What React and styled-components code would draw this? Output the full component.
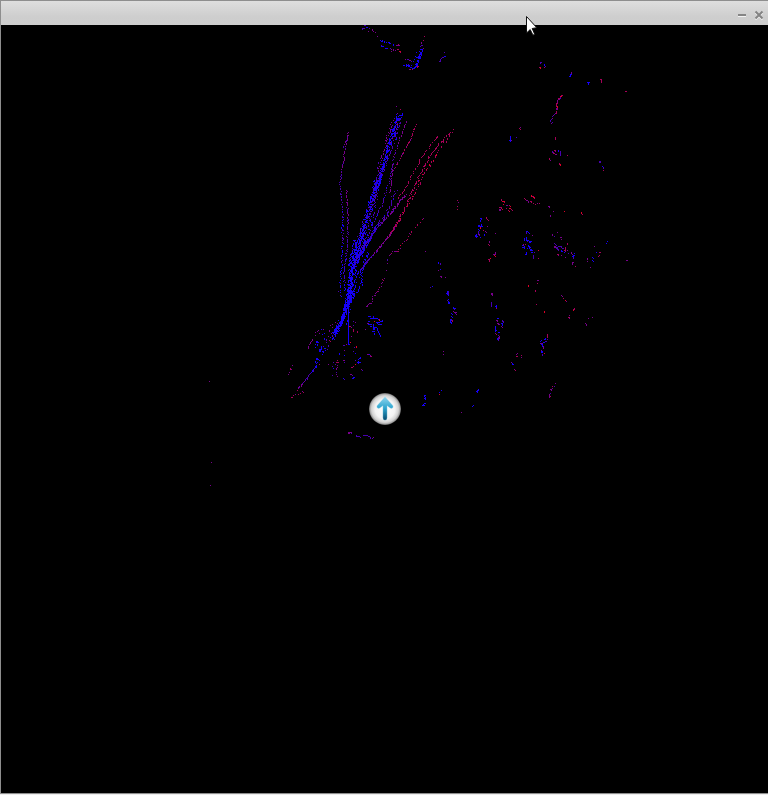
import React from "react";
import styled, { createGlobalStyle } from "styled-components";

const GlobalStyle = createGlobalStyle`
  * { box-sizing: border-box; }
  body { margin: 0; background: #ededed; overflow: hidden; }
`;

const Window = styled.main`
  position: relative;
  display: flex;
  flex-direction: column;
  width: 768px;
  height: 794px;
  border: solid #8e8e8e;
  border-width: 1px 0 1px 1px;
  background: #000;
  overflow: hidden;
`;

const TitleBar = styled.header`
  flex: 0 0 24px;
  display: flex;
  justify-content: flex-end;
  align-items: flex-start;
  gap: 7px;
  padding: 9px 4px 0 0;
  background: linear-gradient(#dedede, #cecece 65%, #cdcdcd);
`;

const ControlButton = styled.button`
  display: block;
  width: 10px;
  height: 11px;
  padding: 0;
  border: 0;
  background: none;
  svg { display: block; }
`;

const Viewport = styled.section`
  flex: 1;
  min-height: 0;
`;

const Plot = styled.svg`
  display: block;
  width: 767px;
  height: 768px;
  shape-rendering: crispEdges;
`;

const Marker = styled.svg`
  position: absolute;
  left: 367px;
  top: 391px;
`;

const Pointer = styled.svg`
  position: absolute;
  left: 524px;
  top: 14px;
`;

const COLORS = { b: "#1600f8", v: "#4800b0", p: "#78008c", m: "#a60058", r: "#dc0028" };

/* Hand-placed returns. Sample units are a third of a pixel from the group's origin.
   Each sample: x,y,colour[,width,height] with width and height in pixels. */
const GROUPS = [
  [280, 20, "252,15,v,2 246,27,v 246,24,v,3 258,21,b,2 267,24,v 264,33,p 276,27,p,1,2 279,33,p 285,36,p 291,48,p 300,60,b 303,63,b,2 306,60,b 312,63,b,1,2 318,66,b 324,66,b,2 327,69,b,2 339,72,b,1,2 348,75,p,4 354,72,m 303,75,v 303,78,b,3 315,84,b,3 330,84,v 333,87,p 333,93,p 339,87,p,1,2 345,90,p 351,87,m,2 357,93,r,2 360,96,m 432,48,m 429,60,m 423,66,p,1,2 420,78,v 423,75,v,2 429,84,p 426,87,b,1,3 420,87,b,2 420,96,b,1,3 423,96,b,1,4 417,93,b 408,96,b 417,102,b,1,5 414,108,b,3,3 408,111,b,3 405,108,b 411,120,b,2,2 414,123,b,1,2 408,129,b,2,4 405,132,b,2 411,138,m,2 411,141,m 405,138,b 402,141,b,2 396,144,b,3 390,141,b,2 378,132,b,1,3 381,135,b,3 384,132,v 384,138,b,2 369,135,b,2 375,117,p 381,117,v,2 387,120,p,2 393,123,v 399,123,b 402,117,b 393,135,b 387,147,p,2 396,147,m 492,96,v 492,108,b,2 486,111,v,2 483,114,v 480,117,v,1,2 477,123,v,2 348,258,p 360,267,m 351,279,p 348,282,b 366,279,b,1,2 357,285,b,4 354,288,b 363,291,b 354,294,b,3 360,297,v 354,300,b,2 342,294,v 339,300,p 348,288,b 348,306,m 351,312,r 336,315,v 351,318,b,1,2 345,321,p 333,327,b 348,327,b,2 345,333,b,1,2 342,339,b,2,3 330,336,v 336,339,b,2 324,336,p 336,354,m 318,345,p 330,366,m 315,360,p 321,369,p 204,336,p 204,345,p 201,351,v 198,360,v,1,2 198,369,v,1,2 192,372,p 189,378,v,1,2 195,378,b"],
  [460, 50, "240,36,v,2 240,39,v 252,42,b,1,2 255,48,v 252,51,m 237,51,m 240,51,r,1,2 333,66,p,1,2 330,72,b,2 330,75,b 327,78,b,2 381,96,b,3 384,99,b,1,2 420,87,m,2 423,90,m,1,3 495,123,m,2 306,135,m 303,135,m 300,138,r,2 300,141,v,1,2 294,144,m,2 294,147,p,2 291,150,p,1,3 288,159,m,2 288,162,m,1,3 291,168,r,1,2 288,174,p,2,2 288,183,m,1,3 285,189,p 282,192,v 279,195,p 276,198,v 276,204,p 273,207,v 270,210,v,1,2 276,216,v 273,219,p 180,231,p 177,234,m 180,237,m 168,261,v 150,258,b,1,4 147,270,b,2 153,270,p 150,273,b 285,261,m,1,3 282,300,m,2 285,303,p 276,303,v,1,2 279,306,p 279,309,m,2 285,312,p,2 294,300,b,1,2 300,303,v,1,2 300,309,v,1,3 267,324,m,1,2 270,330,p 297,339,m,1,2 300,342,r,1,2 321,315,m 417,333,v,2,2 426,348,b 429,351,v,1,2 429,360,m 192,444,m 195,447,m 213,435,r,1,2 216,438,m,2 219,441,r,2 222,444,m 123,447,p"],
  [460, 190, "123,27,m,1,2 126,33,r,3 132,36,m 129,42,r 138,45,p,2 147,45,m 150,48,r 117,51,m,3 123,54,m 117,57,p,2,2 126,57,r 138,54,m 147,54,r,2 153,57,m 144,60,m 156,60,m 147,63,r 192,24,m 195,27,p 198,30,p,2 204,33,p,1,2 210,33,m,2 213,36,m 219,39,m 225,42,m 231,39,p 237,39,m 264,48,p,2 267,51,p 279,63,p 270,75,p,1,2 312,63,r 363,66,r,1,2 366,72,m 60,84,b,2 63,87,b 60,90,b,1,2 78,81,m,1,2 81,87,m 84,90,m 54,105,b,2,2 57,108,b,4 63,102,b,1,3 60,111,r,1,2 54,117,b 57,120,b 54,123,v,1,4 57,132,m 57,135,v 48,132,b 45,135,b,2,2 51,138,b 48,141,v 60,141,b 69,120,m 75,123,p 78,126,p 72,132,b,1,2 81,108,p 105,129,p 87,153,p,1,2 84,162,m 87,165,m 105,186,p,1,2 99,192,p,3 102,195,r 105,198,r 90,204,r 84,207,m,2 87,210,m,1,2 198,123,b,2 198,126,v,1,2 204,126,b 207,129,b 216,135,p 192,144,b,1,3 198,141,b,1,4 198,150,b,3 201,153,v 207,153,b,3 207,156,b,2 189,162,p,1,2 195,162,m 186,165,b,2 192,168,b,1,3 186,171,b,3 201,174,b 204,165,b,1,2 207,168,b 207,171,b,2 207,174,b 210,177,b,2,2 216,180,b 213,186,b,2 222,186,v 198,186,b,1,3 195,192,b 219,195,v,1,4 234,180,r 234,204,m 276,132,p,1,2 282,138,v 291,126,p 300,141,p,2 303,147,p 282,159,v 285,162,v 288,165,v 282,168,p,2,2 288,171,v,2,2 294,168,v,4 291,177,v,2 294,180,v 303,171,v 306,174,v,2 303,180,b,1,2 306,183,b 312,186,b 312,180,m,2 315,171,m,1,3 315,183,p 321,159,m,1,2 321,180,p 291,192,m,2 294,195,p 303,195,p 315,201,p 324,189,v 333,186,p,1,2 336,192,p 339,195,b,2 342,189,b 336,198,b,2 339,201,v,1,2 336,216,p,2 336,219,p,1,2 345,228,m 402,168,p 408,186,b 417,186,m,2 417,195,m 414,198,m 381,204,p,1,2 381,213,p 396,201,b 399,204,b 396,210,b 399,213,b 390,231,p 441,153,b 438,159,b 498,210,p,2 231,270,p,2 231,279,m 204,285,r,1,2"],
  [420, 280, "36,18,b 30,21,v 81,33,b,2 81,36,b,1,3 78,39,b 84,45,b 84,57,b 81,60,v 84,63,b,1,3 87,66,b,1,2 99,81,b,1,2 102,84,b,2 102,87,v 99,93,p 102,96,p,3 105,99,v 108,102,p 93,99,b 96,102,b 93,108,b 96,111,b 90,117,b,1,4 93,117,v,1,2 96,120,m,1,2 93,126,b,1,2 213,39,p,2,2 216,45,p 213,66,v,1,5 228,75,b,1,3 225,78,b 228,84,m 231,114,b,2 228,120,p,2 231,123,p 246,120,v,1,2 249,123,v,1,2 243,129,b,2 246,132,b,1,2 231,129,p,2 234,132,p,2 243,138,p 246,141,p 225,138,b,1,6 228,150,b 234,156,b,2 225,159,p 228,162,m 234,165,v 237,168,p,1,3 234,171,v,1,4 231,174,b,1,2 69,213,p 69,222,p 291,219,p 288,222,p 288,228,m,2 303,225,m 303,231,p 273,246,p 276,249,b,1,2 279,252,b 282,267,p 285,270,m 324,15,r,1,2 351,0,p,2 351,9,p 345,30,m,1,2 348,72,m 372,93,r,1,2 423,45,p 426,48,p 429,54,m 435,60,r 438,63,p 447,105,p 444,111,m,2 447,114,p 462,84,m,1,2 459,87,m 459,90,r 504,114,p 516,111,p 495,129,p 498,132,p,1,2 381,162,m,1,4 375,174,b,1,2 372,177,b 381,177,v 363,180,b 360,183,b 375,183,v,2 369,186,b,2 360,189,p,3 363,192,b,2 366,195,b,1,2 369,198,p,1,3 363,210,p 363,213,b,2,2 372,219,r 366,222,v,1,2 405,309,p 402,318,v 396,318,m 396,324,p 390,327,p,2 393,330,p 390,339,v 387,342,p,1,4 390,348,m 174,327,b,1,2 171,330,b,1,3 168,333,b 63,330,b 57,336,b 57,342,r 12,345,b,2 12,348,b 15,351,b,1,3 12,354,b 12,369,b,2 9,372,b 6,375,b,3 159,375,b 156,378,b 123,396,p"],
  [280, 290, "294,3,p 288,6,p 285,9,p 285,15,p 276,24,p 276,33,p 273,39,p 267,39,p,2 264,42,p 261,45,p 258,48,p,2 174,3,v 180,6,b 180,15,v 183,18,b 264,78,b,3 279,78,b,1,3 270,84,b,5 285,84,b,3 294,87,b 297,87,r,1,2 282,93,r 264,93,b,2 300,93,b,3 261,99,p,2 264,102,b,4 288,96,b,4 291,99,b 294,102,b,3 270,108,b,2 279,102,b,1,4 282,111,b,3 279,114,b,2 279,117,b,2 276,123,b,3 282,129,b,1,2 291,114,b,1,3 294,123,b,1,2 297,129,b,1,2 300,135,b,1,2 303,102,b 306,90,b 255,117,p 261,192,p,2 267,192,b 270,195,p,1,2 273,198,m 36,225,p 30,234,m,1,2 33,237,p 27,246,p 24,252,p 36,321,m 33,321,m,2 39,315,m 45,312,p 54,312,m 60,309,m 51,300,m 66,303,p 69,306,m 204,426,p,4 204,429,p,2 213,429,v 228,435,v,1,2 231,438,v,3 240,441,v 249,435,v,5 264,438,v,2 270,441,v,1,2 276,444,v 279,441,p 240,201,b 237,204,b,2 234,207,b 234,213,b,1,3 237,216,b,2 225,210,v 231,216,b 225,222,r 213,231,m,2 219,228,m 243,237,p 246,240,v 210,252,p,2 216,255,v 219,261,b,2 216,264,b,2 189,264,b 192,267,v 168,216,m,3 171,210,m 165,222,v 171,225,p 171,231,p 168,234,p,1,2 168,246,v 168,252,p 171,258,p 159,216,v 156,228,v 159,234,b 156,255,v 144,222,p 189,210,p,2 192,216,v 177,189,b,1,2 192,180,p 192,195,b 189,165,v,2 198,162,p 204,162,b,2 210,156,r 219,183,v 225,189,b 228,168,r,1,2 222,171,v 225,96,p 219,93,v 219,105,v 210,108,m 213,111,p 219,117,m,1,2 219,123,m 231,123,m,1,2 213,138,p 207,108,r 114,120,p 111,123,p 105,126,p 105,135,p 117,129,p 123,117,b 129,117,p 132,129,b 126,132,b 132,144,b,1,2 96,147,p,1,2 93,153,p 90,156,p,1,2 87,162,p 84,168,p,1,3 108,153,b,2,2 114,156,b 105,162,b 105,171,b 111,162,b,1,2 123,168,b,1,4 117,177,b,2,3 126,183,b,2 129,186,b 132,174,b,2 135,180,b 141,177,v 126,192,b 144,138,p 147,150,m 150,141,b 150,153,m 156,135,b 156,126,b 156,102,p 150,105,p 156,111,p 165,96,p 168,105,b 171,99,p 174,90,b 108,204,b,2,2 114,207,b 105,213,b,1,2 111,216,b 117,222,m 108,219,b 117,210,b 489,183,p 489,192,p"],
  [280, 150, "532,152,m 535,156,p 532,168,m 532,177,m 435,303,p 429,204,p 426,207,m 420,216,m 411,222,m 411,225,m 405,231,m 393,243,m,1,2 387,249,p 390,252,m 384,258,m 381,267,m 378,270,m 372,273,p 366,279,m 360,285,r 360,294,p 354,297,m 351,303,m,2 342,303,p,3 336,303,p 333,309,m 327,315,p 330,312,p 321,327,v,1,2 321,339,p 318,360,p 312,384,p 306,387,m 309,390,m 306,396,p 303,399,p 303,408,p 297,411,m 294,417,p 291,423,m 288,426,p 285,429,p 282,435,p 276,438,p 276,447,p 480,339,v,1,2 474,336,b,1,2 480,357,b 474,360,p 480,378,p,2 483,381,p 495,381,p 450,411,v 456,408,b 504,423,v,1,4 498,429,b,2 501,432,b 504,447,b"],
  [0, 0, "627,1143,p 633,1386,p 630,1455,p"],
];

/* Dense sweeps: [points, from, to, density, spread], points in pixels. */
const SWEEPS = [
  [[398,117, 390,142, 383,168, 377,190], "b", "b", 2.2, 1.6],
  [[401,119, 389,155, 376,190, 365,225, 352,270], "v", "b", 0.75, 1.6],
  [[392,122, 382,158, 374,191], "p", "v", 0.5, 1.4],
  [[376,180, 369,210, 361,236, 354,262], "b", "b", 2.1, 2.2],
  [[377,192, 372,218, 362,242, 354,266], "v", "b", 1, 2],
  [[380,158, 376,190, 361,231, 352,252], "v", "v", 0.45, 2.5],
  [[407,121, 401,135, 394,157, 390,178, 382,205, 368,235, 353,265], "p", "b", 0.58, 0.9],
  [[416,124, 411,138, 402,155, 393,171, 390,194], "m", "p", 0.55, 0.4],
  [[406,194, 390,214, 380,224, 369,239, 358,257, 351,272], "p", "b", 1.25, 0.9],
  [[376,229, 366,247, 354,268], "b", "b", 1.2, 0.8],
  [[396,190, 386,215, 374,230, 362,248], "v", "b", 0.75, 1.5],
  [[438,136, 426,151, 414,171, 407,186, 397,200], "m", "m", 0.52, 0.9],
  [[450,132, 430,155, 416,183, 404,211, 391,233], "m", "m", 0.78, 1],
  [[437,154, 421,178, 411,200, 395,227], "r", "r", 0.16, 0.8],
  [[454,129, 438,152, 424,174, 415,194, 398,219], "m", "m", 0.36, 1],
  [[401,218, 389,236, 375,253, 365,264, 357,275], "m", "b", 1.6, 0.7],
  [[348,133, 343,164, 340,181, 343,212, 342,260, 340,291], "p", "b", 0.6, 0.8],
  [[347,190, 348,222, 347,250, 344,272, 345,292], "p", "b", 0.77, 0.8],
  [[356,240, 351,263, 350,286, 349,298], "b", "b", 2.2, 2.3],
  [[360,248, 355,266, 354,286, 349,302], "b", "b", 1.5, 3.2],
  [[369,252, 361,273, 361,286, 349,304], "b", "b", 1, 1.6],
  [[351,284, 347,301, 343,320, 334,333], "b", "b", 3.2, 1.9],
  [[353,291, 347,306, 341,323, 333,340], "b", "b", 2.4, 1.7],
  [[348.4,300, 348.4,320, 348.4,344], "b", "b", 1.6, 0.3],
  [[333,330, 327,344, 320,354], "p", "b", 0.35, 3],
  [[354,294, 349,312, 344,325], "b", "b", 0.4, 2.2],
  [[317,365, 308,377, 298,389], "b", "p", 1, 0.3],
];

const LEVELS = "bvpmr";

function buildPaths() {
  const cells = { b: new Set(), v: new Set(), p: new Set(), m: new Set(), r: new Set() };
  GROUPS.forEach(([ox, oy, data]) => {
    data.split(" ").forEach((sample) => {
      const [x, y, color, w = 1, h = 1] = sample.split(",");
      cells[color].add(`M${Math.floor(ox + x / 3)} ${Math.floor(oy + y / 3)}h${w}v${h}h-${w}z`);
    });
  });
  let seed = 7319;
  const random = () => {
    seed = (seed * 1664525 + 1013904223) >>> 0;
    return seed / 4294967296;
  };
  SWEEPS.forEach(([pts, from, to, density, spread]) => {
    const count = pts.length / 2 - 1;
    for (let i = 0; i < count; i++) {
      const [x0, y0, x1, y1] = pts.slice(i * 2, i * 2 + 4);
      const steps = Math.round(Math.hypot(x1 - x0, y1 - y0) * density);
      for (let n = 0; n < steps; n++) {
        const t = (n + random() * 0.6) / steps;
        const along = (i + t) / count;
        const x = Math.floor(x0 + (x1 - x0) * t + (random() * 2 - 1) * spread);
        const y = Math.floor(y0 + (y1 - y0) * t);
        const base = LEVELS.indexOf(from) + (LEVELS.indexOf(to) - LEVELS.indexOf(from)) * along;
        const level = Math.max(0, Math.min(4, Math.round(base + (random() - 0.5) * 0.9)));
        const tall = random() > 0.72 ? 2 : 1;
        cells[LEVELS[level]].add(`M${x} ${y}h1v${tall}h-1z`);
      }
    }
  });
  return Object.entries(cells).map(([key, set]) => [key, [...set].join("")]);
}

const PATHS = buildPaths();

function PointCloud() {
  return (
    <Plot viewBox="1 25 767 768" aria-label="Sensor returns">
      {PATHS.map(([key, d]) => <path key={key} d={d} fill={COLORS[key]} />)}
    </Plot>
  );
}

function HeadingMarker() {
  return (
    <Marker width="34" height="34" viewBox="0 0 34 34" aria-label="Heading">
      <defs>
        <radialGradient id="disc">
          <stop offset="0" stopColor="#fff" />
          <stop offset="0.62" stopColor="#f3f3f3" />
          <stop offset="0.84" stopColor="#d2d2d2" />
          <stop offset="0.94" stopColor="#a2a2a2" />
          <stop offset="1" stopColor="#555" />
        </radialGradient>
        <linearGradient id="arrow" gradientUnits="userSpaceOnUse" x1="0" y1="5" x2="0" y2="28">
          <stop offset="0" stopColor="#8dd5ef" />
          <stop offset="0.5" stopColor="#2ba3cd" />
          <stop offset="1" stopColor="#074b70" />
        </linearGradient>
      </defs>
      <circle cx="17" cy="17" r="16" fill="url(#disc)" />
      <path d="M17 4.8L9.2 13.4Q8.2 15 9.5 16Q10.8 16.9 12.2 15.7L14.9 13.7V26Q14.9 28.2 17 28.2Q19.1 28.2 19.1 26V13.7L21.8 15.7Q23.2 16.9 24.5 16Q25.8 15 24.8 13.4Z" fill="url(#arrow)" stroke="#b1dfee" strokeWidth="0.3" />
    </Marker>
  );
}

export default function App() {
  return (
    <>
      <GlobalStyle />
      <Window>
        <TitleBar>
          <ControlButton aria-label="Minimize">
            <svg width="10" height="11" viewBox="0 0 10 11">
              <path d="M1 6.5h8" stroke="#f2f2f2" />
              <path d="M1 5h8" stroke="#858585" strokeWidth="2" />
            </svg>
          </ControlButton>
          <ControlButton aria-label="Close">
            <svg width="10" height="11" viewBox="0 0 10 11">
              <path d="M1.5 2.5l7 7m0-7l-7 7" stroke="#f1f1f1" strokeWidth="2" />
              <path d="M1.5 1.5l7 7m0-7l-7 7" stroke="#838383" strokeWidth="2" />
            </svg>
          </ControlButton>
        </TitleBar>
        <Viewport><PointCloud /></Viewport>
        <HeadingMarker />
        <Pointer width="14" height="22" viewBox="0 0 14 22">
          <path d="M1.5 1.5V18L5.2 14.6L8 20.2L9.7 19.2L7.2 13.5L11.8 12.7Z" fill="#fff" stroke="#111" />
        </Pointer>
      </Window>
    </>
  );
}
